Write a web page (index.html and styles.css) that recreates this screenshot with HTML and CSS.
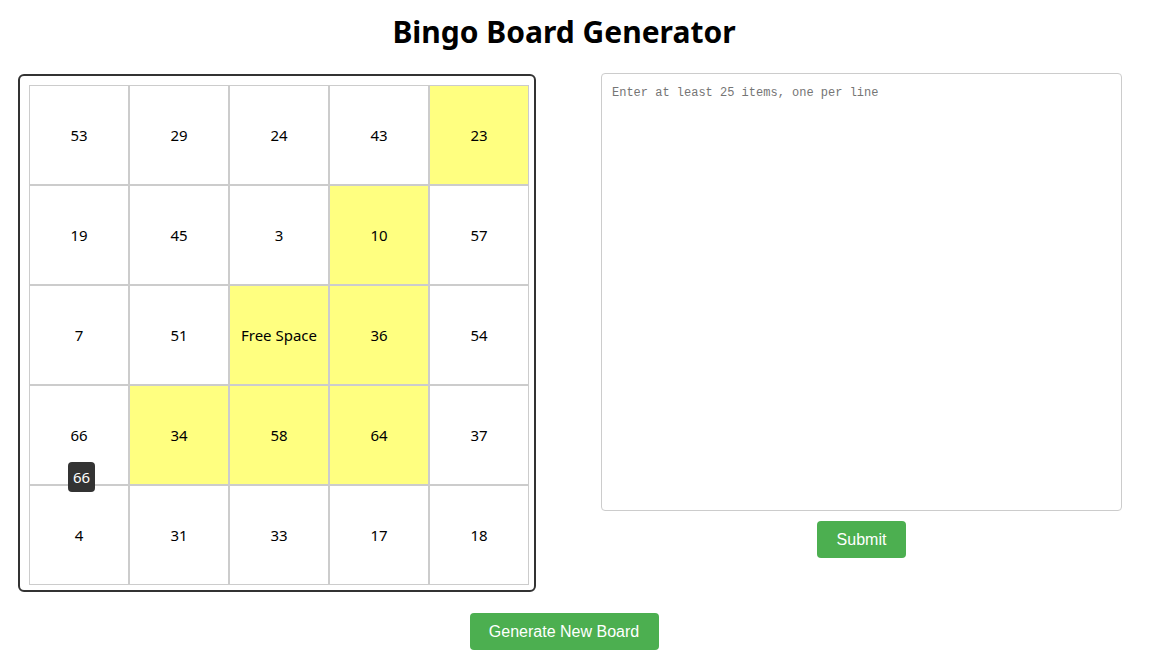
FILE: index.html
```html
<!DOCTYPE html>
<html>
<head>
<meta charset="utf-8">
<title>Bingo Board Generator</title>
<link rel="stylesheet" href="styles.css">
</head>
<body>
<div class="app">
  <h1 class="title">Bingo Board Generator</h1>
  <div class="main">
    <div class="board">
      <div class="grid">
        <div class="cell">53</div>
        <div class="cell">29</div>
        <div class="cell">24</div>
        <div class="cell">43</div>
        <div class="cell marked">23</div>
        <div class="cell">19</div>
        <div class="cell">45</div>
        <div class="cell">3</div>
        <div class="cell marked">10</div>
        <div class="cell">57</div>
        <div class="cell">7</div>
        <div class="cell">51</div>
        <div class="cell marked">Free Space</div>
        <div class="cell marked">36</div>
        <div class="cell">54</div>
        <div class="cell has-tip">66<span class="tooltip">66</span></div>
        <div class="cell marked">34</div>
        <div class="cell marked">58</div>
        <div class="cell marked">64</div>
        <div class="cell">37</div>
        <div class="cell">4</div>
        <div class="cell">31</div>
        <div class="cell">33</div>
        <div class="cell">17</div>
        <div class="cell">18</div>
      </div>
    </div>
    <div class="input-col">
      <textarea class="items" placeholder="Enter at least 25 items, one per line"></textarea>
      <button class="btn submit">Submit</button>
    </div>
  </div>
  <div class="footer">
    <button class="btn generate">Generate New Board</button>
  </div>
</div>
</body>
</html>
```

FILE: styles.css
```css
html, body {
  margin: 0;
  padding: 0;
  background: #fff;
}
body {
  padding: 8px;
  font-family: "Noto Sans", "Open Sans", sans-serif;
  color: #000;
}
.app {
  width: 1112px;
}
.title {
  margin: 0;
  padding-top: 4px;
  text-align: center;
  font-size: 30px;
  font-weight: 700;
  line-height: 40px;
  height: 61px;
}
.main {
  display: flex;
  align-items: flex-start;
  margin-left: 10px;
  gap: 65px;
}
.board {
  margin-top: 1px;
  border: 2px solid #333;
  border-radius: 6px;
  padding: 9px 5px 5px 9px;
}
.grid {
  display: grid;
  grid-template-columns: repeat(5, 100px);
  grid-template-rows: repeat(5, 100px);
}
.cell {
  box-sizing: border-box;
  border: 1px solid #ccc;
  display: flex;
  align-items: center;
  justify-content: center;
  font-size: 15px;
  background: #fff;
  position: relative;
}
.cell.marked {
  background: #ffff80;
}
.tooltip {
  position: absolute;
  left: 38px;
  top: 76px;
  width: 27px;
  height: 30px;
  box-sizing: border-box;
  background: #333;
  color: #fff;
  border-radius: 4px;
  font-size: 15px;
  display: flex;
  align-items: center;
  justify-content: center;
  z-index: 2;
}
.input-col {
  width: 521px;
  display: flex;
  flex-direction: column;
  align-items: center;
}
.items {
  box-sizing: border-box;
  width: 521px;
  height: 438px;
  border: 1px solid #ccc;
  border-radius: 4px;
  padding: 12px 10px 10px 10px;
  font-family: "Liberation Mono", "DejaVu Sans Mono", monospace;
  font-size: 12px;
  resize: none;
  margin: 0;
}
.items::placeholder {
  color: #757575;
}
.btn {
  background: #4caf50;
  color: #fff;
  border: none;
  border-radius: 4px;
  font-family: "Liberation Sans", Arial, sans-serif;
  font-size: 16px;
  height: 37px;
  padding: 0 20px;
  cursor: pointer;
}
.submit {
  margin-top: 10px;
  width: 89px;
  padding: 0;
}
.footer {
  display: flex;
  justify-content: center;
  margin-top: 21px;
}
.generate {
  width: 189px;
  padding: 0;
}
```
